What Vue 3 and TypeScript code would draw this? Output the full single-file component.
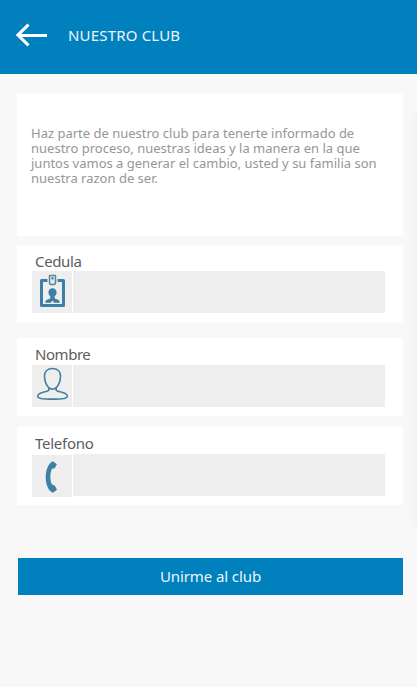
<script setup lang="ts">
import { ref } from 'vue'

interface Field {
  id: string
  label: string
}

const fields: Field[] = [
  { id: 'cedula', label: 'Cedula' },
  { id: 'nombre', label: 'Nombre' },
  { id: 'telefono', label: 'Telefono' },
]

const values = ref<Record<string, string>>({ cedula: '', nombre: '', telefono: '' })
</script>

<template>
  <div class="screen">
    <header class="bar">
      <svg class="back" width="32" height="24" viewBox="0 0 32 24">
        <path d="M12.5 1.6 2 12 12.5 22.4M2 12.5H31" fill="none" stroke="#fff" stroke-width="3" />
      </svg>
      <h1 class="title">NUESTRO CLUB</h1>
    </header>
    <main class="content">
      <section class="card intro">
        <p class="text">
          Haz parte de nuestro club para tenerte informado de
          nuestro proceso, nuestras ideas y la manera en la que
          juntos vamos a generar el cambio, usted y su familia son
          nuestra razon de ser.
        </p>
      </section>
      <section v-for="f in fields" :key="f.id" class="card field" :class="f.id">
        <label class="label" :for="f.id">{{ f.label }}</label>
        <div class="row">
          <div class="icon">
            <svg v-if="f.id === 'cedula'" width="40" height="42" viewBox="0 0 40 42">
              <path d="M15.500 9.500H9.500V34.500H31.500V9.500H25.500" fill="none" stroke="#3c80a5" stroke-width="3" stroke-linejoin="round" />
              <path d="M17.500 4.500H23.500V12L22.500 13.500H18.500L17.500 12Z" fill="#e3e9ec" stroke="#55879f" stroke-width="1.500" stroke-linejoin="round" />
              <rect x="19.500" y="6" width="2" height="2.500" fill="#4a8099" />
              <path d="M20.500 17.300c2.600 0 4.100 1.700 4.100 4 0 1.700-.7 3-1.900 4v2.200l3.400 1.300c1 .5 1.600 1.500 1.700 3h-5.600L20.500 29.500l-1.700 2.300h-5.600c.1-1.500.7-2.500 1.700-3l3.400-1.300v-2.200c-1.200-1-1.900-2.300-1.900-4 0-2.300 1.500-4 4.100-4z" fill="#3c80a5" />
            </svg>
            <svg v-else-if="f.id === 'nombre'" width="40" height="42" viewBox="0 0 40 42">
              <path d="M20.500 3.500c-5 0-8 3.200-8 7.600 0 4.600 1.500 8.800 4.300 11.700v2.400c-1 1.200-3 1.500-5.500 2-3.500.8-5.600 2-5.600 4.200 0 2.300 5.700 2.700 14.800 2.700s14.800-.4 14.800-2.700c0-2.200-2.100-3.400-5.600-4.200-2.500-.5-4.500-.8-5.500-2v-2.400c2.800-2.900 4.300-7.100 4.300-11.700 0-4.400-3-7.600-8-7.600zM16.800 22.700q3.700 3 7.400 0" fill="none" stroke="#4582a2" stroke-width="1.600" />
            </svg>
            <svg v-else width="40" height="42" viewBox="0 0 40 42">
              <path d="M20.8 6.200 24.900 9.200 22.700 13.300 20 13.800C17.800 18.500 17.800 25 20 29.500L22.700 30.500 25 34.700 20.900 37.700C11.400 33.500 11.400 11 20.800 6.200Z" fill="#3c80a5" />
            </svg>
          </div>
          <input :id="f.id" v-model="values[f.id]" class="input" type="text" />
        </div>
      </section>
      <button class="join" type="button">Unirme al club</button>
    </main>
    <div class="edge"></div>
  </div>
</template>

<style>
body {
  background: #f8f8f8;
}
</style>

<style scoped>
.screen {
  position: relative;
  height: 687px;
  overflow: hidden;
  background: #f8f8f8;
  font-family: "Noto Sans", "Open Sans", sans-serif;
}
.bar {
  height: 74px;
  box-sizing: border-box;
  padding: 23px 0 0 16px;
  display: flex;
  align-items: flex-start;
  background: #0080bd;
}
.back {
  flex: none;
}
.title {
  margin: 2px 0 0 20px;
  font-size: 15px;
  line-height: 21px;
  font-weight: 400;
  letter-spacing: 0.18px;
  color: #edf6fb;
  white-space: nowrap;
}
.content {
  padding: 19px 14px 0 17px;
}
.card {
  background: #fff;
  box-sizing: border-box;
}
.intro {
  height: 143px;
  padding: 33px 20px 0 14px;
}
.text {
  margin: 0;
  font-size: 13px;
  line-height: 15px;
  color: #969696;
}
.field {
  height: 78px;
  padding: 8px 18px 0 15px;
}
.cedula {
  margin-top: 9px;
}
.nombre {
  margin-top: 15px;
}
.telefono {
  margin-top: 11px;
}
.label {
  display: block;
  height: 18px;
  padding-left: 3px;
  font-size: 15px;
  line-height: 16px;
  letter-spacing: -0.35px;
  color: #5c5c5c;
}
.nombre .label,
.telefono .label {
  height: 19px;
}
.nombre .label {
  letter-spacing: -0.45px;
}
.telefono .label {
  letter-spacing: -0.25px;
}
.row {
  display: flex;
  gap: 1px;
}
.icon {
  width: 40px;
  height: 42px;
  background: #eee;
}
.icon svg {
  display: block;
}
.telefono .icon {
  margin-top: 1px;
}
.input {
  flex: 1;
  min-width: 0;
  height: 42px;
  padding: 0 10px;
  box-sizing: border-box;
  border: 0;
  border-radius: 0;
  outline: 0;
  background: #eee;
  font: inherit;
}
.join {
  display: block;
  width: 385px;
  height: 37px;
  margin: 53px 0 0 1px;
  padding: 0;
  border: 0;
  background: #0080bd;
  color: #edf6fb;
  font: 15px/37px "Noto Sans", "Open Sans", sans-serif;
  letter-spacing: -0.1px;
}
.edge {
  position: absolute;
  left: 418px;
  top: 115px;
  width: 20px;
  height: 408px;
  box-shadow: 0 0 14px rgba(0, 0, 0, 0.07);
}
</style>
